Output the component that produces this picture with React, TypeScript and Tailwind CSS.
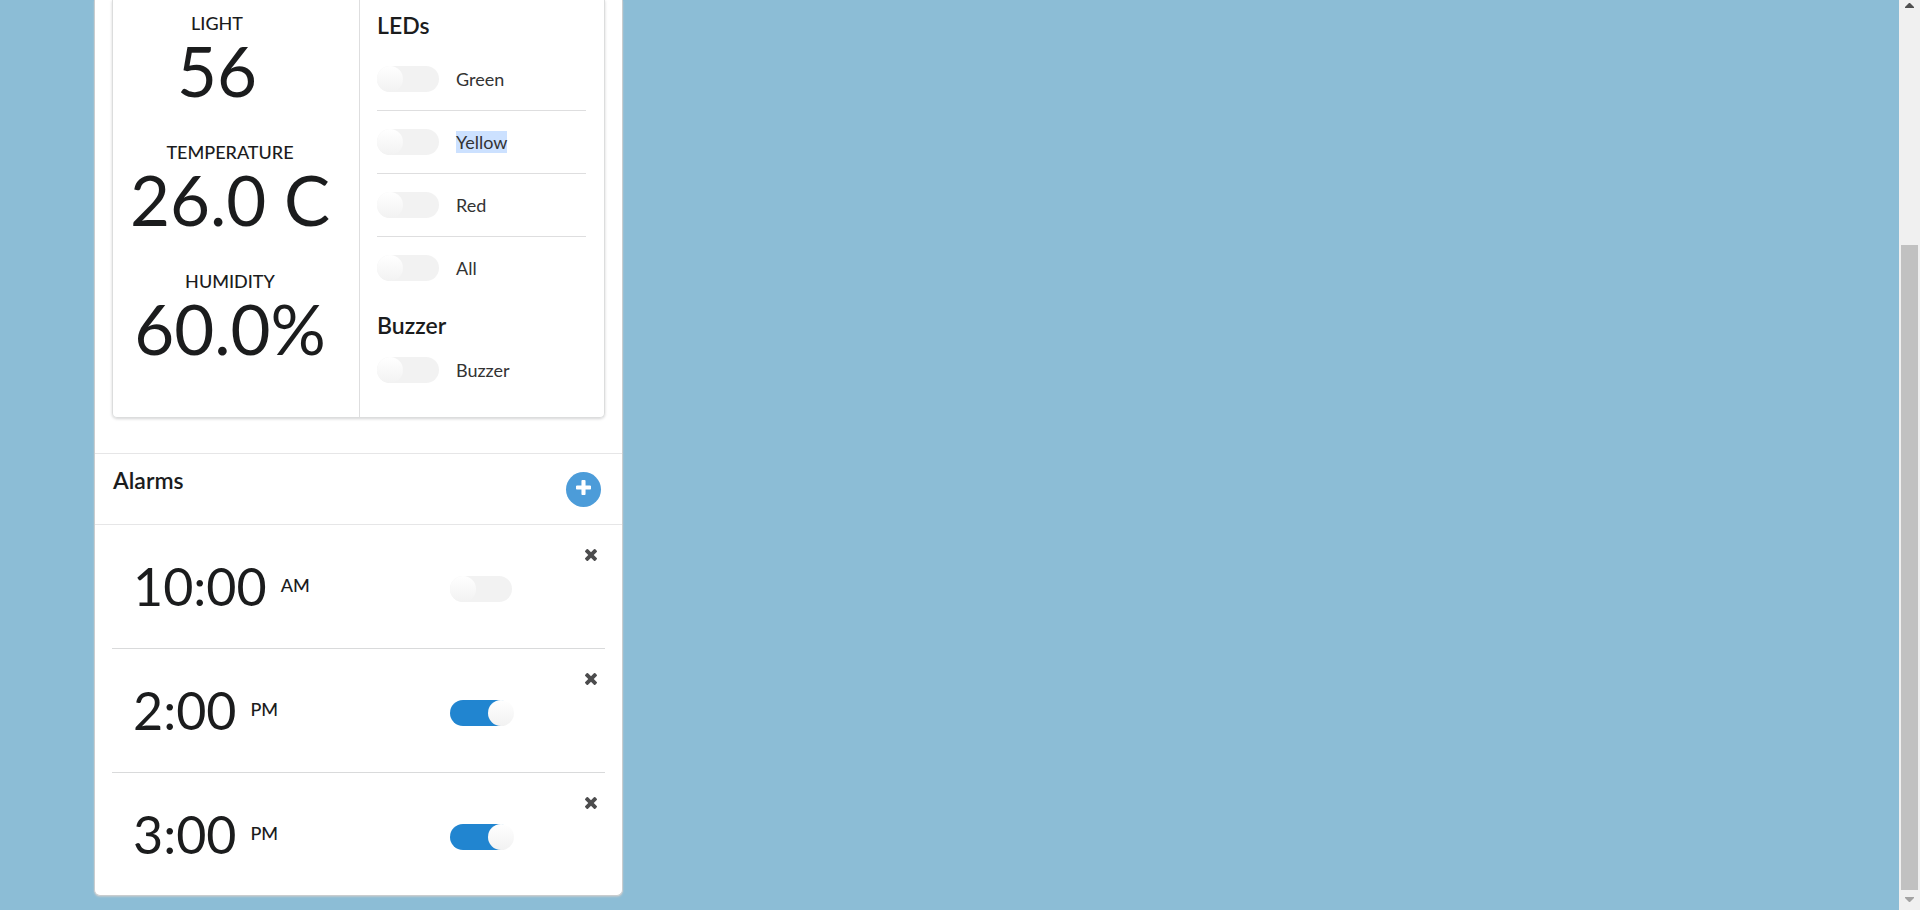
import { useState } from "react";

type Reading = { label: string; value: string; className: string };

const readings: Reading[] = [
  { label: "LIGHT", value: "56", className: "pr-[26px]" },
  { label: "TEMPERATURE", value: "26.0 C", className: "" },
  { label: "HUMIDITY", value: "60.0%", className: "" },
];

const leds = ["Green", "Yellow", "Red", "All"];

const initialAlarms = [
  { time: "10:00", period: "AM", on: false },
  { time: "2:00", period: "PM", on: true },
  { time: "3:00", period: "PM", on: true },
];

function Toggle({ id, on = false, label }: { id: string; on?: boolean; label?: string }) {
  return (
    <input
      id={id}
      type="checkbox"
      defaultChecked={on}
      aria-label={label}
      className="relative h-[26px] w-[62px] shrink-0 cursor-pointer appearance-none rounded-full bg-[#f2f2f2] before:absolute before:left-0 before:top-0 before:size-[26px] before:rounded-full before:bg-linear-to-b before:from-white before:to-[#f2f2f2] checked:bg-[#2185d0] checked:before:left-[38px]"
    />
  );
}

function SwitchRow({ name, id, divided }: { name: string; id: string; divided: boolean }) {
  return (
    <div className={divided ? "border-b border-[#dededf] py-[18px]" : "py-[18px]"}>
      <div className="flex items-center gap-[17px]">
        <Toggle id={id} />
        <label htmlFor={id} className="cursor-pointer text-[18px] leading-[22px] text-[#333333]">
          {name === "Yellow" ? <mark className="bg-[#cce1ff] text-inherit">{name}</mark> : name}
        </label>
      </div>
    </div>
  );
}

function PlusIcon() {
  return (
    <svg viewBox="192 128 1408 1408" className="size-[15px] fill-white" aria-hidden="true">
      <path d="M1600 736v192q0 40-28 68t-68 28h-416v416q0 40-28 68t-68 28h-192q-40 0-68-28t-28-68v-416h-416q-40 0-68-28t-28-68v-192q0-40 28-68t68-28h416v-416q0-40 28-68t68-28h192q40 0 68 28t28 68v416h416q40 0 68 28t28 68z" />
    </svg>
  );
}

function CloseIcon() {
  return (
    <svg viewBox="302 366 1188 1188" className="size-3 fill-[#4c4c4d]" aria-hidden="true">
      <path d="M1490 1322q0 40-28 68l-136 136q-28 28-68 28t-68-28l-294-294-294 294q-28 28-68 28t-68-28l-136-136q-28-28-28-68t28-68l294-294-294-294q-28-28-28-68t28-68l136-136q28-28 68-28t68 28l294 294 294-294q28-28 68-28t68 28l136 136q28 28 28 68t-28 68l-294 294 294 294q28 28 28 68z" />
    </svg>
  );
}

function ScrollRail() {
  return (
    <div className="flex w-[21px] shrink-0 flex-col items-center bg-[#f0f0f0]">
      <svg viewBox="0 0 9 5" className="mt-[3px] mb-3 h-[5px] w-[9px] fill-[#505050]" aria-hidden="true">
        <path d="M4 0h1l4 4v1H0V4z" />
      </svg>
      <div className="grow-[225]" />
      <div className="w-[17px] grow-[645] bg-[#c1c1c1]" />
      <svg viewBox="0 0 9 5" className="mt-[7px] mb-2 h-[5px] w-[9px] fill-[#a3a3a3]" aria-hidden="true">
        <path d="M0 0h9v1L5 5H4L0 1z" />
      </svg>
    </div>
  );
}

export default function App() {
  const [alarms, setAlarms] = useState(initialAlarms);

  return (
    <div className="flex min-h-screen bg-[#8cbdd6] font-[Lato,sans-serif] text-[#1b1c1d]">
      <main className="flex-1 pb-[14px] pl-[94px]">
        <div className="w-full max-w-[529px] rounded-b-[6px] border border-t-0 border-[#c9cdcf] bg-white shadow-[0_1px_2px_0_#bcc8ce]">
          <div className="px-[17px] pb-[35px]">
            <div className="grid grid-cols-[247fr_244fr] rounded-b-[5px] border border-t-0 border-[#dcdddd] shadow-[0_1px_3px_0_#d4d4d5]">
              <section className="flex flex-col items-center gap-[33px] border-r border-[#dededf] pt-[11px] pr-3">
                {readings.map((r) => (
                  <div key={r.label} className={`text-center ${r.className}`}>
                    <div className="text-[18px] leading-6 font-medium">{r.label}</div>
                    <div className="text-[69px] leading-[72px] whitespace-nowrap">{r.value}</div>
                  </div>
                ))}
              </section>
              <section className="pt-[11px] pr-[18px] pb-4 pl-[17px]">
                <h2 className="mb-[9px] text-[23px] leading-7 font-semibold">LEDs</h2>
                {leds.map((name, i) => (
                  <SwitchRow key={name} id={`led-${name}`} name={name} divided={i < leds.length - 1} />
                ))}
                <h2 className="mt-3 text-[23px] leading-7 font-semibold">Buzzer</h2>
                <SwitchRow id="buzzer" name="Buzzer" divided={false} />
              </section>
            </div>
          </div>

          <div className="flex items-start justify-between border-y border-[#e6e6e7] pt-3 pr-[21px] pb-[17px] pl-[18px]">
            <h2 className="text-[23px] leading-7 font-semibold">Alarms</h2>
            <button
              type="button"
              aria-label="Add alarm"
              className="mt-[6px] flex size-[35px] cursor-pointer items-start justify-center rounded-full bg-[#4c9cd9] pt-2"
              onClick={() => setAlarms([...alarms, { time: "4:00", period: "PM", on: false }])}
            >
              <PlusIcon />
            </button>
          </div>

          <ul className="px-[17px]">
            {alarms.map((alarm, i) => (
              <li
                key={i}
                className="grid h-[124px] grid-cols-[338px_1fr_auto] items-start border-b border-[#d9dadb] pr-2 last:h-[122px] last:border-b-0"
              >
                <div className="flex items-center gap-[14px] pt-[34px] pl-[21px]">
                  <span className="text-[52px] leading-[54px]">{alarm.time}</span>
                  <span className="pb-0.5 text-[18px] leading-6 font-medium">{alarm.period}</span>
                </div>
                <div className="flex pt-[51px]">
                  <Toggle id={`alarm-${i}`} on={alarm.on} label={`${alarm.time} ${alarm.period}`} />
                </div>
                <button
                  type="button"
                  aria-label={`Remove ${alarm.time} ${alarm.period}`}
                  className="mt-6 cursor-pointer"
                  onClick={() => setAlarms(alarms.filter((_, n) => n !== i))}
                >
                  <CloseIcon />
                </button>
              </li>
            ))}
          </ul>
        </div>
      </main>
      <ScrollRail />
    </div>
  );
}
